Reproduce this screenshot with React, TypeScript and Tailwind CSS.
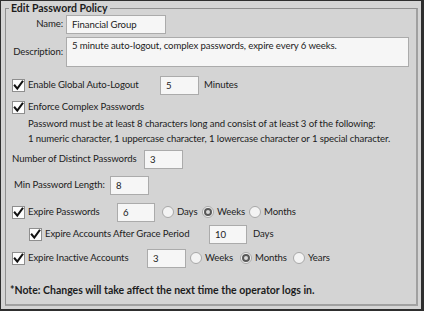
import React from 'react';

function Check({ className = '' }: { className?: string }) {
  return (
    <span
      className={`inline-flex h-[13px] w-[13px] shrink-0 items-center justify-center border border-[#8e8e8e] bg-[#fdfdfd] ${className}`}
    >
      <svg width="11" height="11" viewBox="0 0 11 11">
        <path d="M1.8 5.6 L4.3 8.6 L9.4 1.6" fill="none" stroke="#111" strokeWidth="2.1" strokeLinecap="square" />
      </svg>
    </span>
  );
}

function Radio({ checked = false }: { checked?: boolean }) {
  return (
    <span className="inline-flex h-[12px] w-[12px] shrink-0 items-center justify-center rounded-full border border-[#a8a8a8] bg-[#f3f3f3]">
      {checked && <span className="h-[8px] w-[8px] rounded-full border-[2px] border-[#595959] bg-[#d9d9d9]" />}
    </span>
  );
}

function Box({ value, w, h = 'h-[19px]' }: { value: string; w: string; h?: string }) {
  return (
    <div className={`${w} ${h} shrink-0 border border-[#ababab] bg-[#f6f6f6] pl-[5px] leading-[17px]`}>{value}</div>
  );
}

function Choice({ label, checked, w }: { label: string; checked?: boolean; w: string }) {
  return (
    <div className={`flex ${w} shrink-0 items-center gap-[3px]`}>
      <Radio checked={checked} />
      <span>{label}</span>
    </div>
  );
}

export default function App() {
  return (
    <div className="h-[311px] w-[424px] overflow-hidden whitespace-nowrap border-l border-t border-b-[2px] border-r-[3px] border-[#2e2e2e] bg-[#d4d4d4] font-['Lato',sans-serif] text-[9.6px] tracking-[-0.1px] text-[#1c1c1c]">
      <fieldset className="ml-[4px] h-[305px] w-[413px] border border-[#8f8f8f] border-b-[2px] border-r-[2px] border-b-[#a0a0a0] border-r-[#a0a0a0]">
        <legend className="ml-[3px] px-[2px] text-[10.5px] font-bold leading-[14px] tracking-normal">Edit Password Policy</legend>

        {/* name / description */}
        <div className="flex h-[19px] items-center">
          <span className="w-[57px] text-right">Name:</span>
          <div className="ml-[3px]">
            <Box value="Financial Group" w="w-[100px]" />
          </div>
        </div>
        <div className="mt-[3px] flex h-[30px] items-center">
          <span className="w-[57px] text-right">Description:</span>
          <div className="ml-[3px] h-[30px] w-[343px] border border-[#ababab] bg-[#f6f6f6] pl-[5px] pt-[1px] leading-[14px]">
            5 minute auto-logout, complex passwords, expire every 6 weeks.
          </div>
        </div>

        {/* auto logout */}
        <div className="mt-[9px] flex h-[19px] items-center">
          <Check className="ml-[6px]" />
          <span className="ml-[3px] w-[132px]">Enable Global Auto-Logout</span>
          <Box value="5" w="w-[39px]" />
          <span className="ml-[5px]">Minutes</span>
        </div>

        {/* complex passwords */}
        <div className="mt-[5px] flex h-[15px] items-center">
          <Check className="ml-[6px]" />
          <span className="ml-[3px]">Enforce Complex Passwords</span>
        </div>
        <div className="mt-[1px] pl-[22px] leading-[15px]">
          <p>Password must be at least 8 characters long and consist of at least 3 of the following:</p>
          <p>1 numeric character, 1 uppercase character, 1 lowercase character or 1 special character.</p>
        </div>

        <div className="mt-[4px] flex h-[19px] items-center">
          <span className="ml-[6px] w-[132px]">Number of Distinct Passwords</span>
          <Box value="3" w="w-[39px]" />
        </div>
        <div className="mt-[7px] flex h-[19px] items-center">
          <span className="ml-[8px] w-[96px]">Min Password Length:</span>
          <Box value="8" w="w-[39px]" />
        </div>

        {/* expiry */}
        <div className="mt-[8px] flex h-[19px] items-center">
          <Check className="ml-[6px]" />
          <span className="ml-[3px] w-[89px]">Expire Passwords</span>
          <Box value="6" w="w-[38px]" />
          <div className="ml-[7px] flex items-center">
            <Choice label="Days" w="w-[40px]" />
            <Choice label="Weeks" checked w="w-[47px]" />
            <Choice label="Months" w="w-[60px]" />
          </div>
        </div>
        <div className="mt-[3px] flex h-[19px] items-center">
          <Check className="ml-[23px]" />
          <span className="ml-[3px] w-[164px]">Expire Accounts After Grace Period</span>
          <Box value="10" w="w-[38px]" />
          <span className="ml-[6px]">Days</span>
        </div>
        <div className="mt-[5px] flex h-[19px] items-center">
          <Check className="ml-[6px]" />
          <span className="ml-[3px] w-[119px]">Expire Inactive Accounts</span>
          <Box value="3" w="w-[39px]" />
          <div className="ml-[4px] flex items-center">
            <Choice label="Weeks" w="w-[50px]" />
            <Choice label="Months" checked w="w-[53px]" />
            <Choice label="Years" w="w-[50px]" />
          </div>
        </div>

        <p className="ml-[4px] mt-[14px] h-[16px] text-[10.5px] font-bold leading-[16px] tracking-normal">
          *Note: Changes will take affect the next time the operator logs in.
        </p>
      </fieldset>
    </div>
  );
}
